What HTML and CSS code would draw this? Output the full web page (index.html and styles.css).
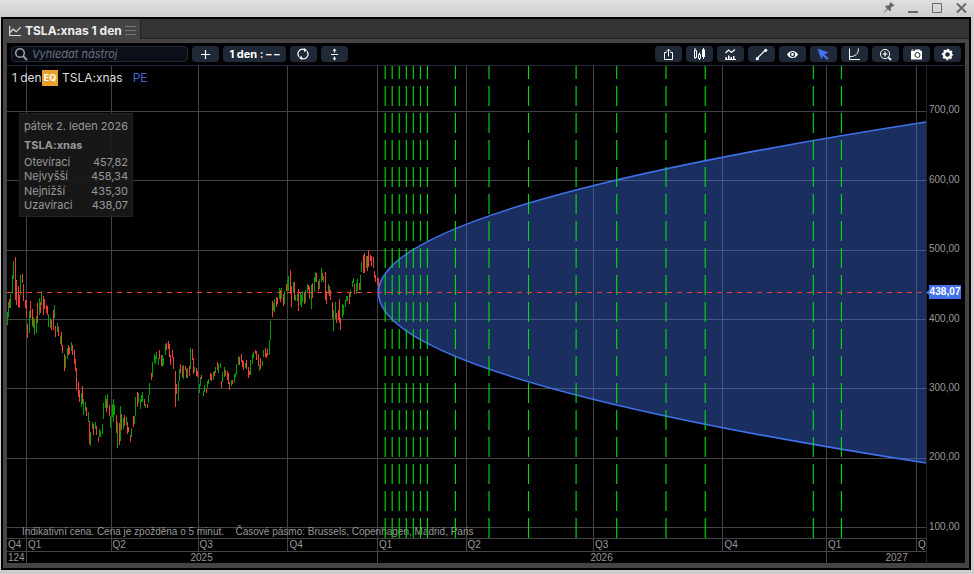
FILE: index.html
```html
<!DOCTYPE html>
<html lang="cs">
<head>
  <meta charset="UTF-8" />
  <meta name="viewport" content="width=device-width, initial-scale=1.0"/>
  <title>TSLA:xnas 1 den</title>
  <link rel="stylesheet" href="styles.css">
</head>
<body>
  <header class="titlebar">
    <svg width="12" height="13" viewBox="0 0 12 13"><path d="M7.6 1l3.9 3.8-1.2.5-.6-.2-2 2 .3 2.2-1 1L4.900 8.200 1 12l-.4-.3 3.500-4.300L2 5.400l1-1 2.200.3 1.900-2-.2-.7z" fill="#666"/></svg>
    <svg width="11" height="13" viewBox="0 0 11 13"><path d="M0 10h10v2H0z" fill="#666"/></svg>
    <svg width="11" height="13" viewBox="0 0 11 13"><path d="M.5 2.500h9v9h-9z" fill="none" stroke="#666"/></svg>
    <svg width="11" height="13" viewBox="0 0 11 13"><path d="M1 2.500l9 9M10 2.500l-9 9" stroke="#666" stroke-width="1.900"/></svg>
  </header>

  <main class="window">
    <div class="tabs">
      <div class="tab">
        <svg width="13" height="12" viewBox="0 0 13 12"><path d="M.7 1v9.500H12M1.200 7.500l3-3.300 3 2.600 4.500-4.600" fill="none" stroke="#ddd" stroke-width="1.200"/></svg>
        <span>TSLA:xnas 1 den</span>
        <svg width="11" height="10" viewBox="0 0 11 10"><path d="M0 .5h11M0 4.500h11M0 8.500h11" stroke="#777"/></svg>
      </div>
      <div class="tab-space"></div>
    </div>

    <div class="panel">
      <div class="toolbar">
        <div class="search">
          <svg width="14" height="14" viewBox="0 0 14 14"><circle cx="6" cy="6" r="4.300" fill="none" stroke="#9a9fa8" stroke-width="1.600"/><path d="M9 9l4 4" stroke="#9a9fa8" stroke-width="2"/></svg>
          <span>Vyhledat nástroj</span>
        </div>
        <div class="btn"><svg viewBox="0 0 14 14"><path d="M7.500 3v9M3 7.500h9" class="line"/></svg></div>
        <div class="btn period">1 den : – –</div>
        <div class="btn"><svg viewBox="0 0 14 14"><path d="M3.200 9.800A4.500 4.500 0 0 1 8.800 2.900M10.800 4.200A4.500 4.500 0 0 1 5.200 11.100" class="line"/><path d="M8 1l3 2-2.800 2.200zM6 13l-3-2 2.800-2.200z" class="fill"/></svg></div>
        <div class="btn"><svg viewBox="0 0 14 14"><path d="M4 7.500h7M7.500 3v2.500M7.500 9.500V12" class="line"/><path d="M7.500 1.500l2 2.300h-4zM7.500 13.500l2-2.300h-4z" class="fill"/></svg></div>

        <div class="btn push"><svg viewBox="0 0 14 14"><path d="M5.500 5.500h-2v7h8v-7h-2M7.500 9.500V2.500M5.200 4.500L7.500 2.100l2.300 2.400" class="line thin"/></svg></div>
        <div class="btn"><svg viewBox="0 0 14 14"><path d="M3 1v2M3 10v2M2.500 3.500h2v7h-2zM7.500 5.500V7.500M7.500 11.500V13M6.500 7.500h2v4h-2z" class="line thin"/><path d="M11 1h1v1.500h1v7.500h-1v2h-1v-2h-1V2.500h1z" class="fill"/></svg></div>
        <div class="btn"><svg viewBox="0 0 14 14"><path d="M2.500 6l3-3 3 2.500 3.500-3M2 12.500h11" class="line"/><path d="M2.500 10H4v2H2.500zM5 8.500h1.500V12H5zM7.500 10H9v2H7.500zM10 9h1.500v3H10z" class="fill"/></svg></div>
        <div class="btn"><svg viewBox="0 0 14 14"><path d="M3 11.500l8.500-8.500" class="line"/><circle cx="3.300" cy="11.700" r="1.600" class="fill"/><circle cx="11.700" cy="3.300" r="1.600" class="fill"/></svg></div>
        <div class="btn"><svg viewBox="0 0 14 14"><path d="M2 7.500C4.500 2.800 10.500 2.800 13 7.500 10.500 12.200 4.500 12.200 2 7.500z" class="fill"/><circle cx="7.500" cy="7.500" r="2" fill="none" stroke="#1f2937" stroke-width="1.200"/></svg></div>
        <div class="btn"><svg viewBox="0 0 14 14"><path d="M1.500 1.500l11 4-4 1.900 4.300 4-1.700 1.700-4.200-4.100L5.200 12.500z" fill="#4272f0"/></svg></div>
        <div class="btn"><svg viewBox="0 0 14 14"><path d="M2.500 1.500v11h10.500M2.500 9.700C8 9.700 11.500 7 11.500 1.500" class="line thin"/></svg></div>
        <div class="btn"><svg viewBox="0 0 14 14"><circle cx="7" cy="7" r="4.600" class="line thin"/><path d="M7 4.500v5M4.500 7h5" class="line"/><path d="M10.300 10.300l2.700 2.700" class="line thick"/></svg></div>
        <div class="btn"><svg viewBox="0 0 14 14"><path d="M2 4h3.500l1-1.500h4.500l1 1.500h1v8.500H2zM2.500 2.500h2v1h-2z" class="fill"/><circle cx="8.500" cy="8" r="2.500" fill="none" stroke="#1f2937"/></svg></div>
        <div class="btn"><svg viewBox="0 0 14 14"><circle cx="7.500" cy="7.500" r="3.500" fill="none" stroke="#fff" stroke-width="2.300"/><circle cx="7.500" cy="7.500" r="4.800" fill="none" stroke="#fff" stroke-width="1.700" stroke-dasharray="2.100 1.670" stroke-dashoffset="1.050"/></svg></div>
      </div>

      <div class="chart">
        <!-- user units are window pixels -->
        <svg class="plot" width="958" height="497" viewBox="7 66 958 497">
          <path class="grid" d="M26.500 66V563M111.500 66V551M198.500 66V551M287.500 66V551M377.500 66V563M466.500 66V551M593.500 66V551M722.500 66V551M826.500 66V563M916.500 66V551"/>
          <path class="grid" d="M7 111.500H926M7 180.500H926M7 250.500H926M7 319.500H926M7 388.500H926M7 458.500H926M7 527.500H926M7 538.500H926M7 551.500H926"/>
          <g class="note">
            <text x="22" y="535" textLength="202">Indikativní cena. Cena je zpožděna o 5 minut.</text>
            <text x="235.500" y="535" textLength="238">Časové pásmo: Brussels, Copenhagen, Madrid, Paris</text>
          </g>
          <g id="candles" shape-rendering="crispEdges"></g>
          <path class="cone" d="M926 122Q-169 292.500 926 463"/>
          <path class="cone-edge" d="M926 122Q-169 292.500 926 463"/>
          <g id="expiries"></g>
          <path class="last" d="M7 292.500H926"/>
          <path class="axis" d="M926.500 66V563"/>
          <g class="labels">
            <text x="8" y="548">Q4</text>
            <text x="28" y="548">Q1</text>
            <text x="112.500" y="548">Q2</text>
            <text x="199.500" y="548">Q3</text>
            <text x="289.500" y="548">Q4</text>
            <text x="379" y="548">Q1</text>
            <text x="467.500" y="548">Q2</text>
            <text x="595" y="548">Q3</text>
            <text x="724.500" y="548">Q4</text>
            <text x="828" y="548">Q1</text>
            <svg x="917" y="539" width="9" height="12"><text x="1" y="9">Q2</text></svg>
            <text x="8" y="561">124</text>
            <text x="190.500" y="561">2025</text>
            <text x="590.500" y="561">2026</text>
            <text x="885.500" y="561">2027</text>
            <text x="929" y="113">700,00</text>
            <text x="929" y="183">600,00</text>
            <text x="929" y="252">500,00</text>
            <text x="929" y="322">400,00</text>
            <text x="929" y="391">300,00</text>
            <text x="929" y="460">200,00</text>
            <text x="929" y="530">100,00</text>
          </g>
          <path d="M929 285h32v14h-32v-4l-3-2.500 3-2.500z" fill="#4272ea"/>
          <text class="price" x="929.500" y="295" textLength="31">438,07</text>
        </svg>

        <div class="legend">
          <span>1 den</span><span class="eq">EQ</span><span class="symbol">TSLA:xnas</span><span class="pe">PE</span>
        </div>

        <div class="tooltip">
          <div class="date">pátek 2. leden 2026</div>
          <div class="name">TSLA:xnas</div>
          <div class="row"><span>Otevírací</span><span>457,82</span></div>
          <div class="row"><span>Nejvyšší</span><span>458,34</span></div>
          <div class="row"><span>Nejnižší</span><span>435,30</span></div>
          <div class="row"><span>Uzavírací</span><span>438,07</span></div>
        </div>
      </div>
    </div>
  </main>

  <script src="script.js"></script>
</body>
</html>
```
FILE: styles.css
```css
* {
  box-sizing: border-box;
}
body {
  margin: 0;
  height: 574px;
  padding: 0 3px 4px 1px;
  background: linear-gradient(#e0e0e0, #ccc 17px);
  font-family: Inter, Arial, sans-serif;
  overflow: hidden;
}
.titlebar {
  display: flex;
  justify-content: flex-end;
  height: 17px;
  gap: 13px;
  padding: 1px 4px 0 0;
}
.window {
  display: flex;
  flex-direction: column;
  height: 553px;
  background: #444;
  border: 2px solid #000;
}
.tabs {
  display: flex;
  height: 24px;
  flex: none;
}
.tab {
  display: flex;
  align-items: center;
  width: 137px;
  padding: 0 0 1px 6px;
  color: #eee;
  font-size: 12px;
  font-weight: bold;
  white-space: nowrap;
}
.tab span {
  width: 96px;
  margin: 0 4px 0 3px;
}
.tab svg {
  flex: none;
}
.tab-space {
  flex: 1;
  height: 20px;
  background: #333;
  border-left: 1px solid #222;
  border-bottom: 1px solid #222;
}
.panel {
  flex: 1;
  margin: 0 4px 5px;
  background: #000;
}
.toolbar {
  display: flex;
  gap: 4px;
  height: 23px;
  padding: 3px 4px 0;
  border-bottom: 1px solid #1f2937;
}
.search {
  display: flex;
  align-items: center;
  width: 177px;
  height: 16px;
  padding-left: 2px;
  gap: 4px;
  background: #0b0f17;
  border: 1px solid #1f2937;
  border-radius: 4px;
  color: #6b7280;
  font-size: 11px;
  font-style: italic;
}
.btn {
  display: flex;
  align-items: center;
  justify-content: center;
  width: 27px;
  height: 16px;
  background: #1f2937;
  border-radius: 4px;
}
.btn svg {
  width: 14px;
  height: 14px;
  margin-right: 1px;
}
.period {
  width: 63px;
  color: #fff;
  font-size: 11px;
  font-weight: bold;
}
.push {
  margin-left: auto;
}
.line {
  fill: none;
  stroke: #fff;
  stroke-width: 1.2;
}
.thin {
  stroke-width: 1;
}
.thick {
  stroke-width: 1.8;
}
.fill {
  fill: #fff;
}
.chart {
  position: relative;
}
.plot {
  display: block;
  font-family: "Liberation Sans", Arial, sans-serif;
  font-size: 10px;
}
.grid {
  fill: none;
  stroke: #444;
}
.axis {
  stroke: #1f2937;
}
.expiry {
  stroke: #00e010;
  stroke-width: 1.1;
  stroke-dasharray: 20 7;
  stroke-dashoffset: 7;
}
.up {
  fill: #00a000;
}
.down {
  fill: #ef4035;
}
.cone {
  fill: rgba(66, 118, 240, 0.4);
}
.cone-edge {
  fill: none;
  stroke: #3f72ea;
  stroke-width: 1.7;
}
.last {
  stroke: #ef4035;
  stroke-dasharray: 5 5;
}
.labels, .note {
  fill: #999;
}
.price {
  fill: #fff;
  font-weight: bold;
}
.legend {
  position: absolute;
  top: 4px;
  left: 5px;
  display: flex;
  height: 16px;
  color: #ddd;
  font-size: 12px;
  line-height: 15px;
}
.legend span:first-child {
  width: 30px;
  white-space: nowrap;
}
.eq {
  width: 16px;
  height: 16px;
  background: #e8a02c;
  color: #fff;
  font-size: 9px;
  font-weight: bold;
  line-height: 16px;
  text-align: center;
}
.symbol {
  margin-left: 4px;
}
.pe {
  margin-left: 10px;
  color: #4169cf;
}
.tooltip {
  position: absolute;
  top: 47px;
  left: 12px;
  width: 114px;
  height: 104px;
  padding: 5px 4px;
  background: rgba(26, 26, 26, 0.9);
  border: 1px solid #222;
  color: #999;
  font-size: 11px;
  line-height: 14.400px;
  white-space: nowrap;
}
.name {
  margin: 5px 0 2px;
  font-weight: bold;
}
.row {
  display: flex;
  justify-content: space-between;
}
```
FILE: script.js
```js
const NS = 'http://www.w3.org/2000/svg';

// x, high, low, direction
const candles = `7 312 325 u,8 302 317 u,9 299 308 d,10 294 308 u,12 275 294 u,13 261 279 u,15 257 300 d,16 280 305 d,18 286 307 d,19 295 308 d,20 275 295 u,22 274 283 d,23 284 301 d,25 300 308 d,26 300 317 d,27 324 338 d,29 311 333 u,30 301 318 d,32 309 326 d,33 317 328 u,34 319 335 u,36 316 333 u,37 303 323 d,39 298 315 u,40 302 313 d,41 291 305 u,43 296 315 d,44 299 309 d,46 305 313 d,47 306 315 d,48 314 327 u,50 318 328 u,51 320 330 d,53 310 330 d,54 305 318 u,55 326 337 d,57 323 332 u,58 327 336 d,60 336 344 u,61 332 346 d,62 345 353 d,64 354 371 d,65 356 368 u,67 348 359 u,68 345 355 d,69 347 354 d,71 342 351 u,72 345 355 d,74 350 364 d,75 359 371 d,76 368 390 d,78 382 397 d,79 390 402 d,81 393 407 u,82 386 404 d,83 399 415 u,85 402 411 u,86 407 416 d,88 412 422 u,89 421 444 d,90 432 446 u,92 422 429 u,93 424 435 d,95 422 429 u,96 426 435 d,98 437 442 d,99 429 437 u,100 431 437 u,102 424 434 u,103 403 419 u,105 396 408 u,106 399 412 d,107 394 408 u,109 405 416 d,110 416 428 u,112 404 417 u,113 399 422 u,114 405 415 u,116 415 433 d,117 422 448 u,119 423 445 d,120 406 441 u,121 414 430 d,123 418 429 u,124 415 426 d,126 417 425 u,127 422 434 d,128 427 432 d,130 435 442 d,131 428 437 u,133 416 427 d,134 416 424 u,135 397 416 u,137 392 407 d,138 393 403 u,140 399 409 u,141 395 402 u,142 392 402 u,144 399 406 d,145 404 408 u,147 404 408 d,148 395 403 u,149 383 395 u,151 373 380 d,152 362 377 u,154 354 363 u,155 356 364 u,156 352 359 u,158 358 365 u,159 350 359 d,161 355 366 d,162 355 367 u,163 358 365 u,165 344 355 u,166 343 350 d,168 341 349 d,169 344 357 d,170 355 365 d,172 350 358 d,173 357 369 d,175 371 407 d,176 384 394 d,178 381 401 u,179 369 381 u,180 364 373 d,182 366 377 d,183 365 379 u,185 366 370 d,186 369 378 d,187 368 378 u,189 366 376 d,190 348 369 u,192 349 360 d,193 358 374 d,194 367 372 u,196 368 376 d,197 371 377 d,199 384 393 u,200 377 386 u,201 375 379 d,203 391 396 u,204 385 392 u,206 388 393 d,207 381 388 u,208 379 384 u,210 373 380 d,211 374 381 d,213 372 380 u,214 371 376 d,215 367 373 u,217 362 370 d,218 364 373 u,220 363 368 u,221 381 388 d,222 372 382 u,224 367 377 u,225 370 376 d,227 371 380 d,228 373 384 d,229 382 390 d,231 380 386 u,232 380 384 d,234 374 383 u,235 373 377 u,236 364 374 u,238 356 365 u,239 357 365 d,241 354 362 d,242 360 367 d,243 361 370 d,245 363 368 u,246 360 369 d,248 367 378 d,249 371 375 d,250 360 375 u,252 354 364 u,253 352 358 u,255 350 354 d,256 351 360 d,258 354 366 d,259 365 371 u,260 358 369 d,262 361 366 u,263 350 357 u,265 348 357 d,266 353 358 d,267 349 356 d,269 340 355 u,270 321 340 u,272 301 317 d,273 303 311 u,274 299 312 u,276 297 307 d,277 298 304 d,279 288 299 u,280 290 302 d,281 288 299 u,283 294 306 d,284 291 304 u,286 284 291 d,287 281 291 u,288 276 291 u,290 270 294 d,291 286 307 d,293 282 293 u,294 282 300 d,295 295 301 u,297 294 301 u,298 289 311 d,300 293 305 u,301 295 307 u,302 291 302 u,304 292 304 d,305 290 303 u,307 284 293 u,308 285 290 d,309 287 299 d,311 285 309 u,312 283 298 d,314 277 292 u,315 272 282 u,316 273 282 d,318 281 291 d,319 279 289 u,321 268 282 u,322 273 280 d,323 276 282 u,325 272 300 d,326 291 304 d,328 284 294 u,329 286 296 d,330 290 300 d,332 302 319 d,333 310 331 u,335 302 319 u,336 313 323 d,338 310 320 d,339 299 323 d,340 318 330 d,342 304 318 u,343 305 315 u,345 300 307 u,346 296 301 u,347 296 301 u,349 293 304 d,350 290 297 u,352 281 287 u,353 278 283 u,354 284 294 d,356 283 294 u,357 279 291 u,359 283 290 d,360 275 290 u,361 262 272 u,363 255 273 d,364 253 273 d,366 256 268 u,367 256 271 d,368 250 267 d,370 255 261 d,371 256 266 d,373 257 268 d,374 271 278 d,375 275 282 d,377 278 285 d,378 278 292 d`;

const expiries = [385.2, 392.2, 399.2, 406.3, 413.3, 420.4, 427.4, 455.4, 489, 528.5, 576.1, 616.7, 666, 705.2, 813.3, 841.4];

const candleLayer = document.getElementById('candles');
candles.split(',').forEach(item => {
  const [x, high, low, dir] = item.split(' ');
  const bar = document.createElementNS(NS, 'rect');
  bar.setAttribute('x', x);
  bar.setAttribute('y', high);
  bar.setAttribute('width', 1);
  bar.setAttribute('height', low - high);
  bar.setAttribute('class', dir === 'u' ? 'up' : 'down');
  candleLayer.appendChild(bar);
});

const expiryLayer = document.getElementById('expiries');
expiries.forEach(x => {
  const line = document.createElementNS(NS, 'path');
  line.setAttribute('d', `M${x} 66V538`);
  line.setAttribute('class', 'expiry');
  expiryLayer.appendChild(line);
});
```
